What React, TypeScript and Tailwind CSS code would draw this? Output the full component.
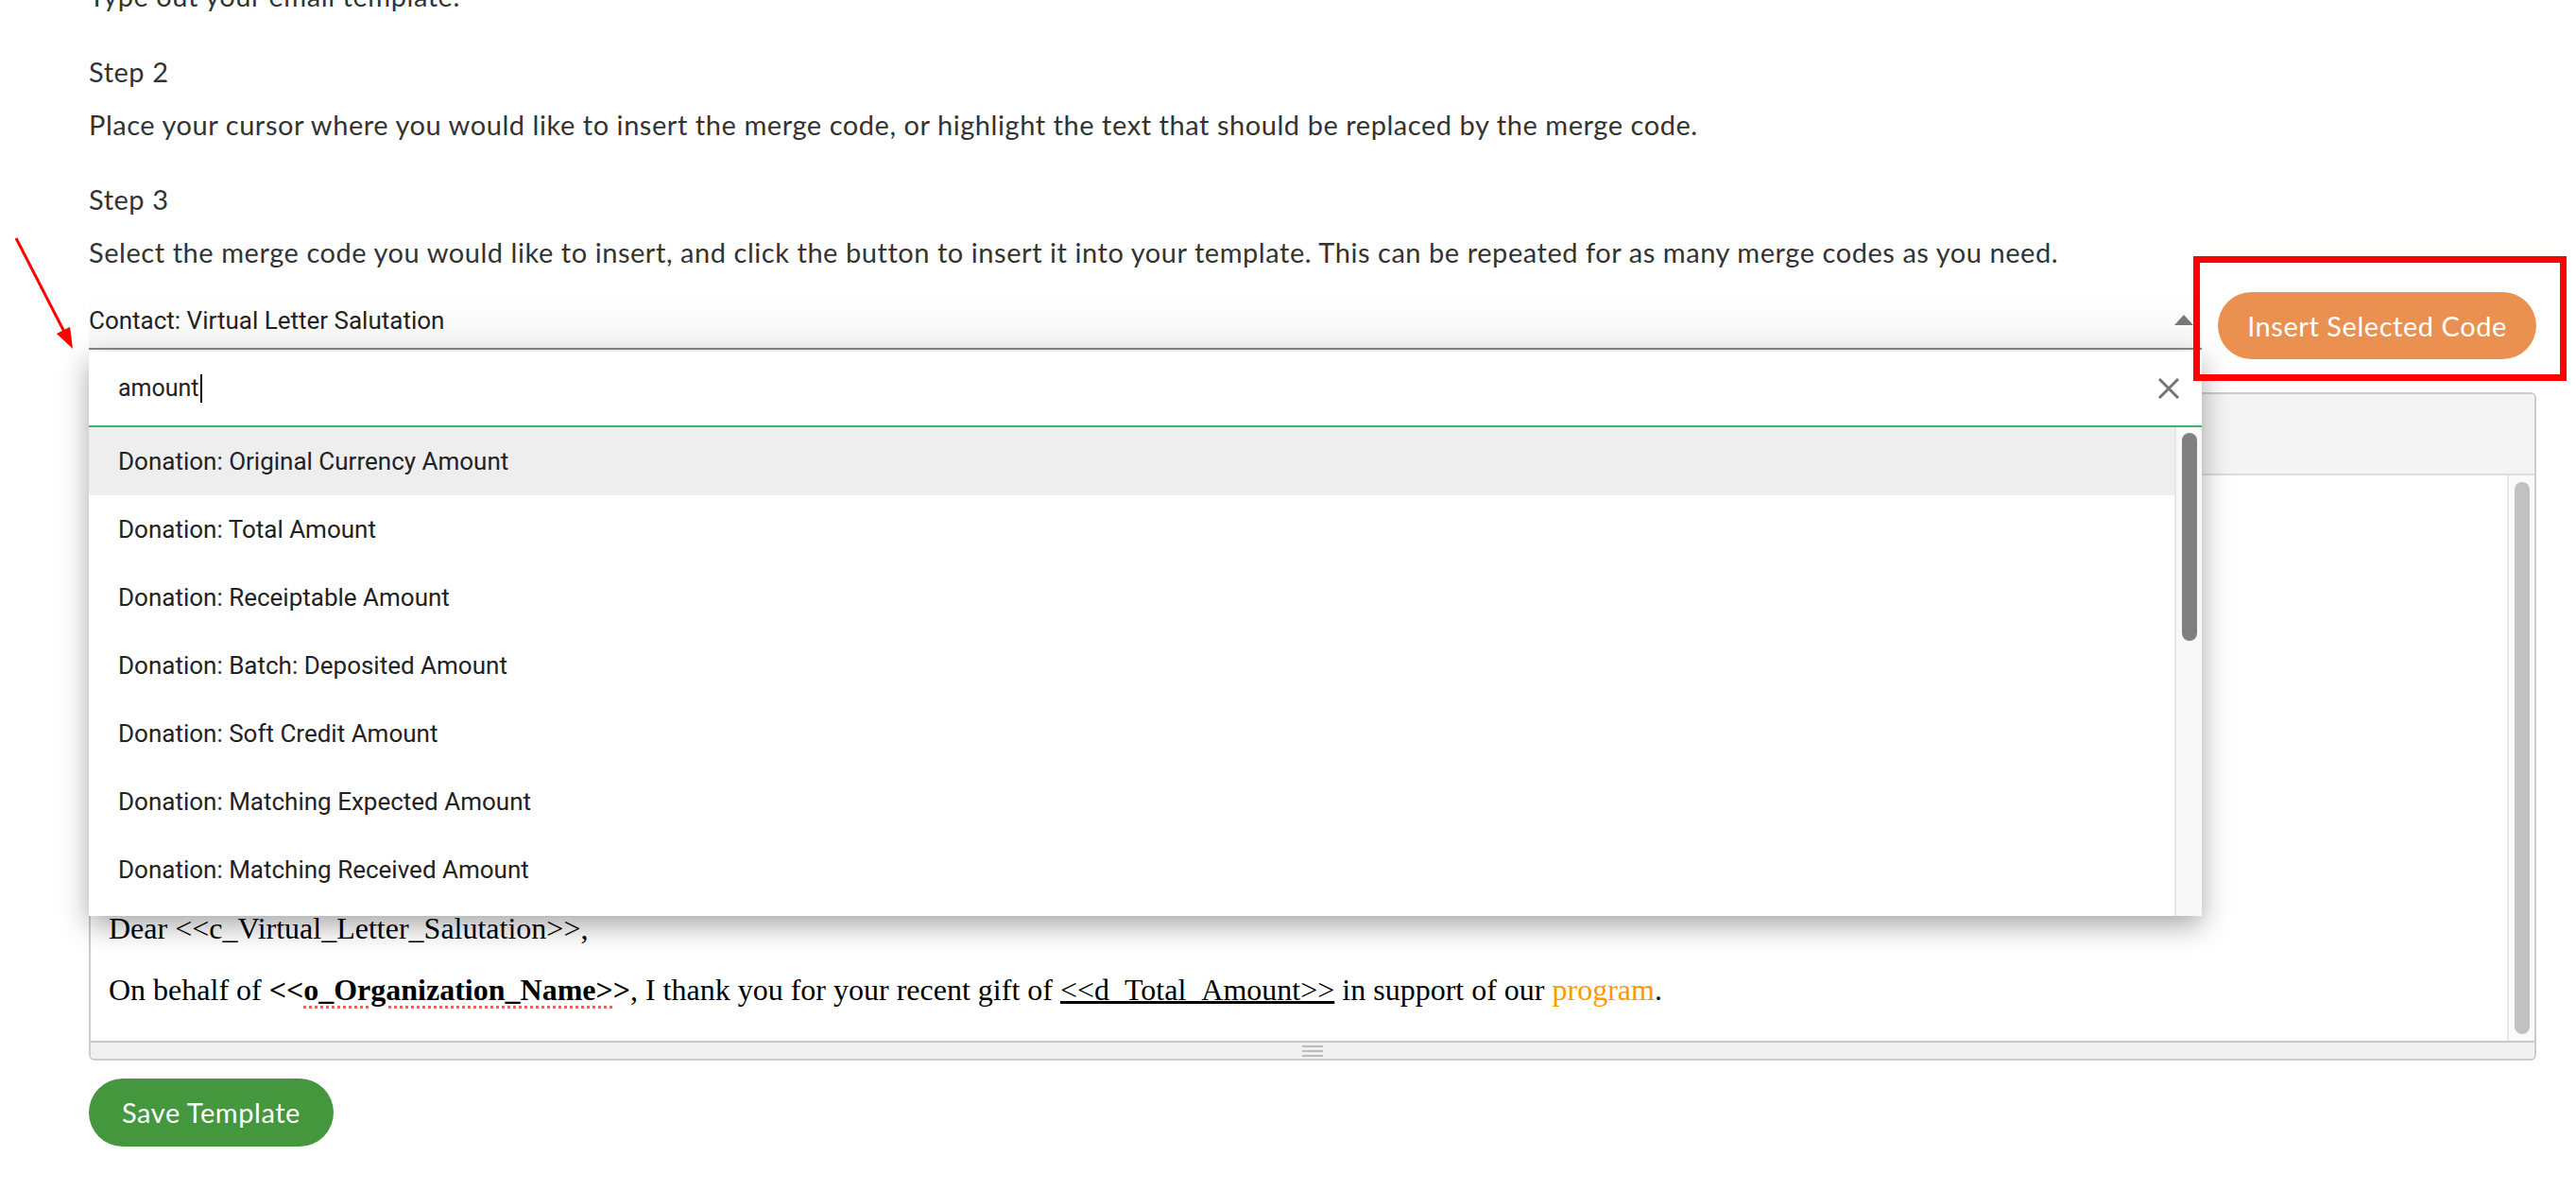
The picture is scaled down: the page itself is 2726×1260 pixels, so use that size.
import React from "react";

const options = [
  "Donation: Original Currency Amount",
  "Donation: Total Amount",
  "Donation: Receiptable Amount",
  "Donation: Batch: Deposited Amount",
  "Donation: Soft Credit Amount",
  "Donation: Matching Expected Amount",
  "Donation: Matching Received Amount",
  "Pledge: Amount",
];

function MergeCodeSelect() {
  return (
    <div className="relative flex-1">
      <div className="flex h-[61px] items-center justify-between border-b-2 border-[#888] bg-gradient-to-b from-white to-[#f6f6f6] font-['Roboto',sans-serif] text-[26px] text-[#222]">
        <span>Contact: Virtual Letter Salutation</span>
        <svg width="20" height="11" viewBox="0 0 20 11" className="mr-[9px]">
          <polygon points="10,0 20,11 0,11" fill="#777" />
        </svg>
      </div>

      <div className="absolute left-0 right-0 top-[calc(100%+2px)] z-10 bg-white shadow-[0_10px_28px_rgba(0,0,0,0.35)]">
        <div className="flex h-[80px] items-center justify-between border-b-2 border-[#3cb371] pl-[31px] pr-[23px] font-['Roboto',sans-serif] text-[25px] text-[#222]">
          <span className="flex items-center">
            amount
            <span className="ml-[1px] inline-block h-[30px] w-[2px] bg-black" />
          </span>
          <svg width="24" height="22" viewBox="0 0 24 22">
            <path d="M2 1 L22 21 M22 1 L2 21" stroke="#757575" strokeWidth="3" />
          </svg>
        </div>
        <div className="flex h-[517px]">
          <div className="flex-1 overflow-hidden">
            {options.map((opt, i) => (
              <div
                key={opt}
                className={`flex h-[72px] items-center pl-[31px] font-['Roboto',sans-serif] text-[26px] text-[#222] ${
                  i === 0 ? "bg-[#eeeeee]" : "bg-white"
                }`}
              >
                {opt}
              </div>
            ))}
          </div>
          <div className="flex w-[29px] justify-center border-l-2 border-[#e6e6e6] bg-[#f8f8f8] pt-[6px]">
            <div className="h-[220px] w-[16px] rounded-full bg-[#808080]" />
          </div>
        </div>
      </div>
    </div>
  );
}

function Editor() {
  return (
    <div className="mt-[35px] flex h-[707px] flex-col overflow-hidden rounded-[6px] border-2 border-[#cccccc]">
      <div className="h-[86px] border-b-2 border-[#dddddd] bg-[#f4f4f4]" />
      <div className="flex min-h-0 flex-1">
        <div className="flex-1 pl-[19px] pt-[461px] font-['Liberation_Serif',serif] text-[32px] leading-[36px] text-black">
          <p className="mb-[29px]">Dear &lt;&lt;c_Virtual_Letter_Salutation&gt;&gt;,</p>
          <p>
            On behalf of{" "}
            <b>
              &lt;&lt;
              <span className="underline decoration-[#ff5a5a] decoration-dotted decoration-[3px] underline-offset-[6px]">
                o_Organization_Name&gt;
              </span>
              &gt;
            </b>
            , I thank you for your recent gift of{" "}
            <span className="underline decoration-[3px] underline-offset-[1px]">
              &lt;&lt;d_Total_Amount&gt;&gt;
            </span>{" "}
            in support of our <span className="text-[#ff9900]">program</span>.
          </p>
        </div>
        <div className="flex w-[29px] justify-center border-l-2 border-[#e8e8e8] bg-[#fafafa] py-[7px]">
          <div className="h-full w-[16px] rounded-full bg-[#c1c1c1]" />
        </div>
      </div>
      <div className="flex h-[19px] items-center justify-center border-t-2 border-[#c8c8c8] bg-[#f0f0f0]">
        <div className="flex flex-col gap-[3px]">
          <div className="h-[2px] w-[22px] bg-[#bbbbbb]" />
          <div className="h-[2px] w-[22px] bg-[#bbbbbb]" />
          <div className="h-[2px] w-[22px] bg-[#bbbbbb]" />
        </div>
      </div>
    </div>
  );
}

export default function App() {
  return (
    <div className="relative h-[1260px] overflow-hidden bg-white pl-[94px] pr-[42px] font-['Lato',sans-serif] text-[29px] leading-[56px] tracking-[0.55px] text-[#333]">
      <div className="-mt-[32px]">
        <p className="mb-[24px]">Type out your email template.</p>
        <p>Step 2</p>
        <p className="mb-[23px]">
          Place your cursor where you would like to insert the merge code, or highlight the text that should be replaced by the merge code.
        </p>
        <p>Step 3</p>
        <p>
          Select the merge code you would like to insert, and click the button to insert it into your template. This can be repeated for as many merge codes as you need.
        </p>
      </div>

      <div className="mt-[14px] flex items-start gap-[17px] tracking-normal">
        <MergeCodeSelect />
        <button className="h-[71px] w-[337px] rounded-full bg-[#ea9151] text-[29px] tracking-[0.55px] text-white">
          Insert Selected Code
        </button>
      </div>

      <div className="tracking-normal">
        <Editor />
      </div>

      <button className="mt-[19px] h-[72px] w-[259px] rounded-full bg-[#45973d] text-[29px] text-white">
        Save Template
      </button>

      {/* annotations */}
      <div className="absolute left-[2321px] top-[271px] z-20 h-[132px] w-[395px] border-[7px] border-[#ff0000]" />
      <svg className="absolute left-0 top-[240px] z-20" width="90" height="140" viewBox="0 0 90 140">
        <line x1="17" y1="12" x2="68" y2="111" stroke="#ff0000" strokeWidth="3" />
        <polygon points="77,129 74.1,105.8 59.9,113.1" fill="#ff0000" />
      </svg>
    </div>
  );
}
